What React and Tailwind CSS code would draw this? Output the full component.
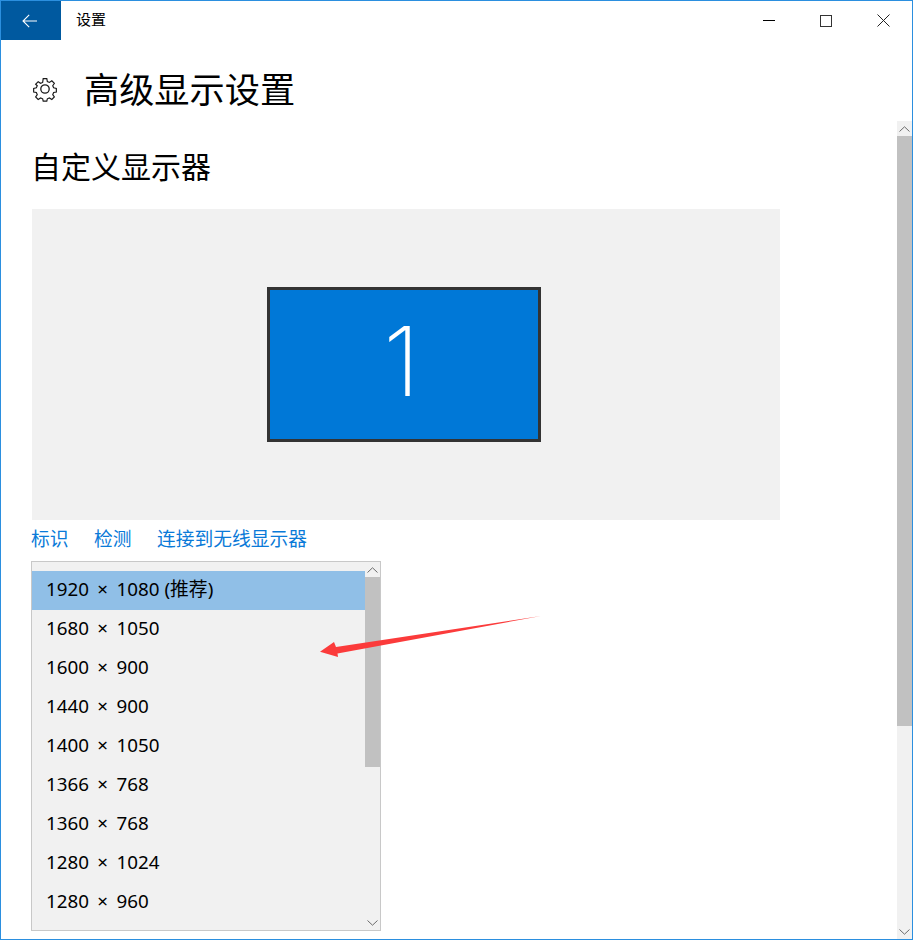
const font = { fontFamily: '"Noto Sans", "Noto Sans CJK SC", sans-serif' };
const rows = ['1680 × 1050', '1600 × 900', '1440 × 900', '1400 × 1050', '1366 × 768', '1360 × 768', '1280 × 1024', '1280 × 960'];

function Chevron({ up, className }) {
  return (
    <svg width="11" height="6" viewBox="0 0 11 6" className={className}>
      <path d={up ? 'M0.5 5.5 L5.5 0.8 L10.5 5.5' : 'M0.5 0.5 L5.5 5.2 L10.5 0.5'} fill="none" stroke="#6b6b6b" strokeWidth="1" />
    </svg>
  );
}

function Gear() {
  return (
    <svg width="26" height="26" viewBox="0 0 26 26" fill="none" stroke="#1a1a1a" strokeWidth="1.3">
      <path d="M11 1.5h4l.6 3.2 2.3 1 2.7-1.8 2.8 2.8-1.8 2.7 1 2.3 3 .6v4l-3 .6-1 2.3 1.8 2.7-2.8 2.8-2.7-1.8-2.3 1-.6 2.6h-4l-.6-2.6-2.3-1-2.7 1.8-2.8-2.8 1.8-2.7-1-2.3-3-.6v-4l3-.6 1-2.3L2.6 7.7l2.8-2.8 2.7 1.8 2.3-1z" transform="translate(1.3 1.3) scale(0.9)" />
      <circle cx="13" cy="13" r="4.2" />
    </svg>
  );
}

export default function App() {
  return (
    <div style={font} className="relative flex h-[940px] w-[913px] flex-col overflow-hidden border border-[#2b8fdf] bg-white text-black">
      <header className="flex h-[39px] shrink-0 items-center">
        <div className="flex h-[39px] w-[60px] items-center justify-center bg-[#00599f]">
          <svg width="16" height="14" viewBox="0 0 16 14" fill="none" stroke="#ffffff" strokeWidth="1.1" className="mr-[2px]">
            <path d="M15 7H1M7.2 0.8 L1 7l6.2 6.2" />
          </svg>
        </div>
        <span className="ml-[15px] pb-[2px] text-[15px]">设置</span>
        <div className="ml-auto flex items-center">
          <div className="mr-[45px] h-px w-[12px] bg-black" />
          <div className="mr-[45px] h-[12px] w-[12px] border border-[#333333]" />
          <svg width="13" height="13" viewBox="0 0 13 13" className="mr-[22px]" stroke="#222222" strokeWidth="1">
            <path d="M0.5 0.5l12 12M12.5 0.5l-12 12" />
          </svg>
        </div>
      </header>
      <div className="flex min-h-0 flex-1">
        <main className="min-w-0 flex-1 pl-[31px]">
          <div className="mt-[28px] flex h-[42px] items-center">
            <Gear />
            <h1 className="ml-[26px] text-[35.2px] leading-[42px]">高级显示设置</h1>
          </div>
          <h2 className="-ml-[1px] mt-[39px] text-[30px] leading-[36px]">自定义显示器</h2>
          <section className="mt-[24px] flex h-[311px] w-[748px] items-center justify-center bg-[#f1f1f1]">
            <div className="mb-[1px] mr-[4px] flex h-[155px] w-[274px] items-center justify-center border-[3px] border-[#333333] bg-[#0078d7] text-[96px] leading-none text-white" style={{ fontFamily: 'Inter, sans-serif', fontWeight: 200 }}>
              <span className="mb-[6px] mr-[5px]">1</span>
            </div>
          </section>
          <nav className="-ml-px mt-[6px] flex h-[25px] items-center gap-[25.5px] text-[18.75px] leading-[25px] text-[#0a7ad8]">
            <span>标识</span>
            <span>检测</span>
            <span>连接到无线显示器</span>
          </nav>
          <div className="-ml-px mt-[10px] flex h-[370px] w-[350px] border border-[#c8c8c8] bg-[#f1f1f1]">
            <ul className="w-[333px] pt-[9px]">
              <li className="flex h-[39px] items-center bg-[#90bfe7] pb-[3px] pl-[14px] text-[18.8px] [word-spacing:3.5px]">
                1920 × 1080
                <span className="ml-[5px]">(推荐)</span>
              </li>
              {rows.map((r) => (
                <li key={r} className="flex h-[39px] items-center pb-[3px] pl-[14px] text-[18.8px] [word-spacing:3.5px]">{r}</li>
              ))}
            </ul>
            <div className="flex w-[15px] flex-col items-center">
              <div className="flex h-[15px] w-full items-center justify-center"><Chevron up /></div>
              <div className="h-[190px] w-full bg-[#c1c1c1]" />
              <div className="flex-1" />
              <div className="flex h-[15px] w-full items-center justify-center"><Chevron /></div>
            </div>
          </div>
        </main>
        <aside className="mt-[81px] flex w-[15px] shrink-0 flex-col bg-[#f1f1f1]">
          <div className="flex h-[15px] items-center justify-center"><Chevron up /></div>
          <div className="h-[590px] bg-[#c1c1c1]" />
          <div className="flex-1" />
          <div className="flex h-[15px] items-center justify-center"><Chevron /></div>
        </aside>
      </div>
      <svg width="225" height="46" viewBox="0 0 225 46" className="absolute left-[318px] top-[612px]">
        <path d="M222 3 L17 34 L15 29 L1 38.7 L19 44 L18.5 40.5 Z" fill="#fb3b3b" />
      </svg>
    </div>
  );
}
